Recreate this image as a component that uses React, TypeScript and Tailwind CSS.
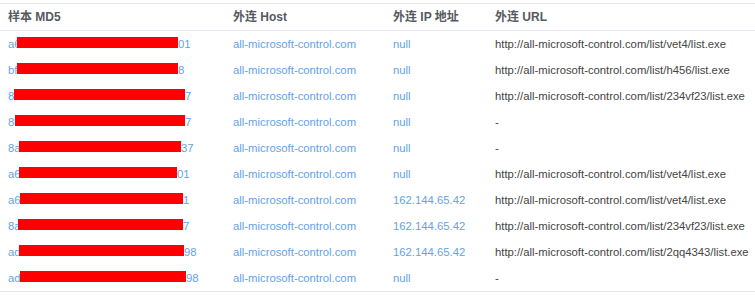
const rows = [
  { pre: 'a6', pw: 'w-[9px]', bw: 'w-[161px]', suf: '01', ip: 'null', url: 'http://all-microsoft-control.com/list/vet4/list.exe' },
  { pre: 'bf', pw: 'w-[9px]', bw: 'w-[161px]', suf: '8', ip: 'null', url: 'http://all-microsoft-control.com/list/h456/list.exe' },
  { pre: '8a', pw: 'w-[6px]', bw: 'w-[171px]', suf: '7', ip: 'null', url: 'http://all-microsoft-control.com/list/234vf23/list.exe' },
  { pre: '8a', pw: 'w-[7px]', bw: 'w-[170px]', suf: '7', ip: 'null', url: '-' },
  { pre: '8a', pw: 'w-[11px]', bw: 'w-[162px]', suf: '37', ip: 'null', url: '-' },
  { pre: 'a6', pw: 'w-[11px]', bw: 'w-[158px]', suf: '01', ip: 'null', url: 'http://all-microsoft-control.com/list/vet4/list.exe' },
  { pre: 'a6', pw: 'w-[12px]', bw: 'w-[163px]', suf: '1', ip: '162.144.65.42', url: 'http://all-microsoft-control.com/list/vet4/list.exe' },
  { pre: '8a', pw: 'w-[10px]', bw: 'w-[165px]', suf: '7', ip: '162.144.65.42', url: 'http://all-microsoft-control.com/list/234vf23/list.exe' },
  { pre: 'ad', pw: 'w-[11px]', bw: 'w-[165px]', suf: '98', ip: '162.144.65.42', url: 'http://all-microsoft-control.com/list/2qq4343/list.exe' },
  { pre: 'ad', pw: 'w-[12px]', bw: 'w-[166px]', suf: '98', ip: 'null', url: '-' },
]

const cols = 'grid grid-cols-[225px_160px_102px_1fr]'

export default function App() {
  return (
    <div className="w-[755px] h-[295px] bg-white pt-[3px] font-['Liberation_Sans','Noto_Sans_CJK_SC',sans-serif]">
      <div className="border-t border-b border-[#e6e7ee]">
        {/* Header */}
        <div className={`${cols} h-[27px] items-center border-b border-[#e6e7ee] text-[12px] font-bold text-[#555a60]`}>
          <div className="pl-2">样本 MD5</div>
          <div className="pl-2">外连 Host</div>
          <div className="pl-2">外连 IP 地址</div>
          <div className="pl-2">外连 URL</div>
        </div>

        {/* Rows */}
        {rows.map((r, i) => (
          <div key={i} className={`${cols} h-[26px] items-center text-[11.3px] whitespace-nowrap`}>
            <div className="pl-2 flex items-center text-[#5fa3e8]">
              <span className={`${r.pw} overflow-hidden`}>{r.pre}</span>
              <span className={`${r.bw} h-[11px] bg-[#ff0000] mb-[3px]`} />
              <span>{r.suf}</span>
            </div>
            <div className="pl-2 text-[#5fa3e8]">all-microsoft-control.com</div>
            <div className="pl-2 text-[#5fa3e8]">{r.ip}</div>
            <div className="pl-2 text-[#444]">{r.url}</div>
          </div>
        ))}
      </div>
    </div>
  )
}
